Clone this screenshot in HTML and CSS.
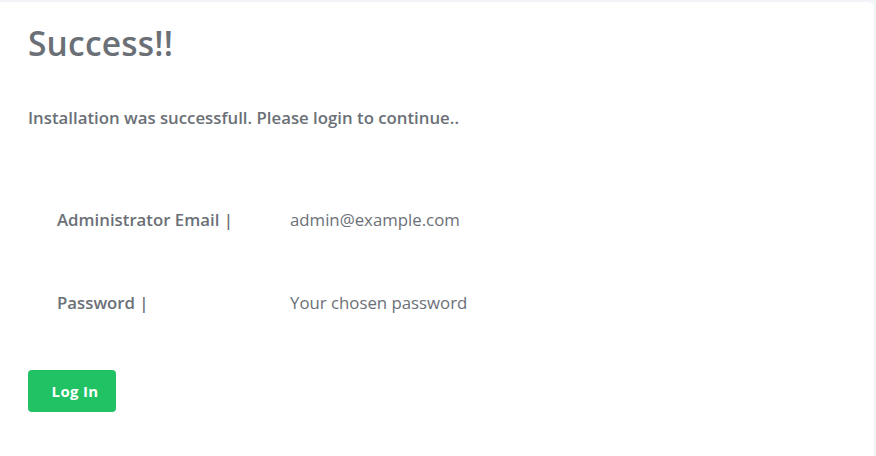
FILE: index.html
```html
<!DOCTYPE html>
<html lang="en">
<head>
<meta charset="utf-8">
<title>Success</title>
<link rel="stylesheet" href="styles.css">
</head>
<body>
<main class="card">
  <h1 class="title">Success!!</h1>
  <p class="lead">Installation was successfull. Please login to continue..</p>
  <dl class="creds">
    <div class="row">
      <dt class="label">Administrator Email |</dt>
      <dd class="value">admin@example.com</dd>
    </div>
    <div class="row">
      <dt class="label">Password |</dt>
      <dd class="value">Your chosen password</dd>
    </div>
  </dl>
  <button class="btn" type="button">Log In</button>
</main>
</body>
</html>
```
FILE: styles.css
```css
html, body {
  margin: 0;
  padding: 0;
  height: 100%;
}
body {
  background: #f3f4f7;
  font-family: "Open Sans", "Liberation Sans", sans-serif;
  color: #6b7077;
  overflow: hidden;
}
.card {
  background: #ffffff;
  margin: 2px 2px 0 0;
  min-height: 100%;
  border-top-right-radius: 6px;
  padding: 19px 0 0 28px;
  box-sizing: border-box;
}
.title {
  margin: 0;
  font-size: 33.5px;
  font-weight: 600;
  line-height: 44px;
  letter-spacing: 0.2px;
}
.lead {
  margin: 41px 0 0;
  font-size: 16.8px;
  font-weight: 600;
  line-height: 24px;
}
.creds {
  margin: 78px 0 0;
  padding: 0 0 0 29px;
  display: flex;
  flex-direction: column;
  gap: 59px;
}
.row {
  display: flex;
  align-items: baseline;
  font-size: 16.8px;
  line-height: 24px;
}
.label {
  width: 233px;
  font-weight: 600;
}
.value {
  margin: 0;
  font-weight: 400;
}
.btn {
  display: block;
  margin-top: 55px;
  width: 88px;
  height: 42px;
  padding: 0 0 0 6px;
  border: 0;
  border-radius: 4px;
  background: #21c264;
  color: #ffffff;
  font-family: inherit;
  font-size: 15px;
  font-weight: 700;
  letter-spacing: 0.3px;
  cursor: pointer;
}
```
